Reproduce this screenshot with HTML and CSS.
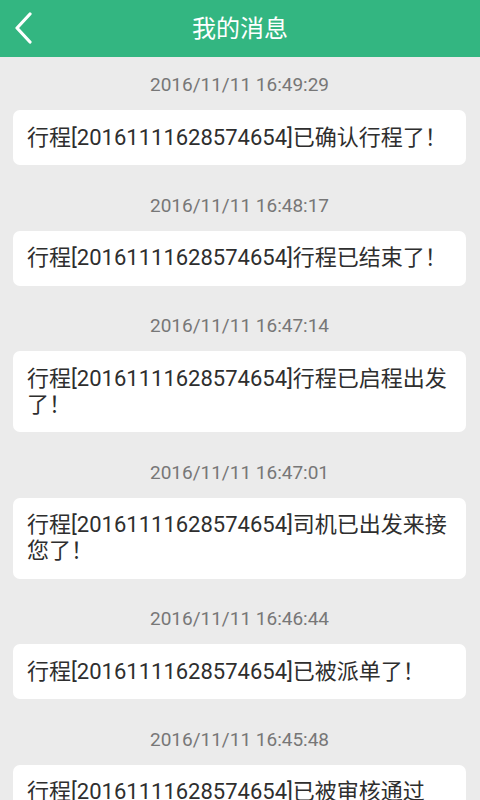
FILE: index.html
```html
<!DOCTYPE html>
<html lang="zh-CN">
<head>
<meta charset="utf-8">
<title>我的消息</title>
<link rel="stylesheet" href="styles.css">
</head>
<body>
<header class="topbar">
  <span class="back">
    <svg width="20" height="32" viewBox="0 0 20 32"><polyline points="16,2 3,16 16,30" fill="none" stroke="#fff" stroke-width="3.2" stroke-linecap="round" stroke-linejoin="round"/></svg>
  </span>
  <h1 class="title">我的消息</h1>
</header>
<main class="list">
  <section class="item">
    <div class="time">2016/11/11 16:49:29</div>
    <div class="card">行程[20161111628574654]已确认行程了！</div>
  </section>
  <section class="item">
    <div class="time">2016/11/11 16:48:17</div>
    <div class="card">行程[20161111628574654]行程已结束了！</div>
  </section>
  <section class="item">
    <div class="time">2016/11/11 16:47:14</div>
    <div class="card">行程[20161111628574654]行程已启程出发了！</div>
  </section>
  <section class="item">
    <div class="time">2016/11/11 16:47:01</div>
    <div class="card">行程[20161111628574654]司机已出发来接您了！</div>
  </section>
  <section class="item">
    <div class="time">2016/11/11 16:46:44</div>
    <div class="card">行程[20161111628574654]已被派单了！</div>
  </section>
  <section class="item">
    <div class="time">2016/11/11 16:45:48</div>
    <div class="card">行程[20161111628574654]已被审核通过了！</div>
  </section>
</main>
</body>
</html>
```
FILE: styles.css
```css
html, body {
  margin: 0;
  padding: 0;
}
body {
  background: #ebebeb;
  font-family: Roboto, "Noto Sans CJK SC", sans-serif;
  width: 480px;
  height: 800px;
  overflow: hidden;
}
.topbar {
  height: 57px;
  background: #33b681;
  display: flex;
  align-items: center;
  justify-content: center;
  position: relative;
}
.back {
  position: absolute;
  left: 14px;
  top: 12px;
  width: 20px;
  height: 32px;
  display: block;
}
.back svg {
  display: block;
}
.title {
  margin: 0;
  color: #fff;
  font-size: 24px;
  font-weight: normal;
  line-height: 30px;
}
.list {
  padding: 0 14px 0 13px;
}
.item {
  margin-top: 12.5px;
}
.item:first-child {
  margin-top: 0;
}
.time {
  padding-top: 18px;
  padding-bottom: 15px;
  height: 20px;
  line-height: 20px;
  text-align: center;
  font-size: 19px;
  color: #777;
}
.card {
  background: #fff;
  border-radius: 7px;
  padding: 14.5px 14px 14.5px 14px;
  font-size: 22px;
  line-height: 26px;
  color: #2e2e2e;
}
```
